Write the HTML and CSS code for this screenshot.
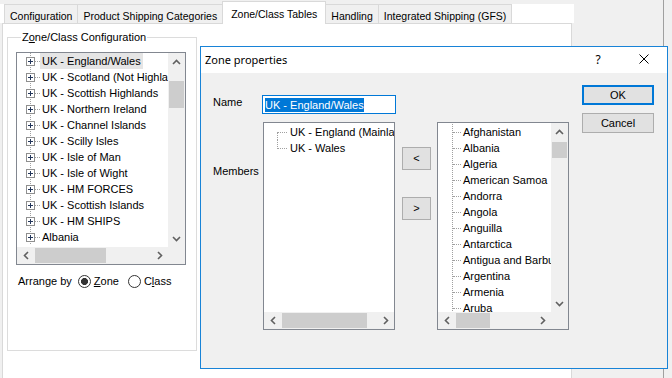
FILE: index.html
```html
<!DOCTYPE html>
<html lang="en">
<head>
    <meta charset="UTF-8">
    <title>Zone/Class Tables</title>
    <link rel="stylesheet" href="styles.css">
</head>
<body>
    <div class="app">
        <div class="left-pane">
            <div class="tabstrip">
                <div class="tab">Configuration</div>
                <div class="tab">Product Shipping Categories</div>
                <div class="tab active">Zone/Class Tables</div>
                <div class="tab">Handling</div>
                <div class="tab">Integrated Shipping (GFS)</div>
            </div>
            <div class="tabpanel">
                <!-- zone/class group -->
                <div class="groupbox">
                    <div class="groupbox-title">Z<u>o</u>ne/Class Configuration</div>
                    <div class="lv lv-main">
                        <div class="lv-content tree">
                            <div class="node sel"><span class="plus"></span><span class="dash"></span><span class="label">UK - England/Wales</span></div>
                            <div class="node"><span class="plus"></span><span class="dash"></span><span class="label">UK - Scotland (Not Highlands)</span></div>
                            <div class="node"><span class="plus"></span><span class="dash"></span><span class="label">UK - Scottish Highlands</span></div>
                            <div class="node"><span class="plus"></span><span class="dash"></span><span class="label">UK - Northern Ireland</span></div>
                            <div class="node"><span class="plus"></span><span class="dash"></span><span class="label">UK - Channel Islands</span></div>
                            <div class="node"><span class="plus"></span><span class="dash"></span><span class="label">UK - Scilly Isles</span></div>
                            <div class="node"><span class="plus"></span><span class="dash"></span><span class="label">UK - Isle of Man</span></div>
                            <div class="node"><span class="plus"></span><span class="dash"></span><span class="label">UK - Isle of Wight</span></div>
                            <div class="node"><span class="plus"></span><span class="dash"></span><span class="label">UK - HM FORCES</span></div>
                            <div class="node"><span class="plus"></span><span class="dash"></span><span class="label">UK - Scottish Islands</span></div>
                            <div class="node"><span class="plus"></span><span class="dash"></span><span class="label">UK - HM SHIPS</span></div>
                            <div class="node"><span class="plus"></span><span class="dash"></span><span class="label">Albania</span></div>
                        </div>
                        <div class="vscroll">
                            <div class="sb-btn"><svg width="9" height="6" viewBox="0 0 9 6"><path d="M1 5L4.5 1.5L8 5" fill="none" stroke="#606060" stroke-width="1.6"/></svg></div>
                            <div class="sb-track"><div class="thumb" style="margin-top:10px;height:27px"></div></div>
                            <div class="sb-btn"><svg width="9" height="6" viewBox="0 0 9 6"><path d="M1 1L4.5 4.5L8 1" fill="none" stroke="#606060" stroke-width="1.6"/></svg></div>
                        </div>
                        <div class="hscroll">
                            <div class="sb-btn"><svg width="6" height="9" viewBox="0 0 6 9"><path d="M5 1L1.5 4.5L5 8" fill="none" stroke="#606060" stroke-width="1.6"/></svg></div>
                            <div class="sb-track"><div class="thumb" style="width:71px"></div></div>
                            <div class="sb-btn"><svg width="6" height="9" viewBox="0 0 6 9"><path d="M1 1L4.5 4.5L1 8" fill="none" stroke="#606060" stroke-width="1.6"/></svg></div>
                        </div>
                        <div class="corner"></div>
                    </div>
                    <div class="arrange">
                        <span>Arrange by</span>
                        <span class="radio checked"></span><span class="radio-text"><u>Z</u>one</span>
                        <span class="radio"></span><span class="radio-text">C<u>l</u>ass</span>
                    </div>
                </div>
            </div>
        </div>
        <div class="right-pane"></div>
    </div>

    <!-- Zone properties dialog -->
    <div class="dialog">
        <div class="dlg-title">
            <span class="caption">Zone properties</span>
            <span class="title-btn">?</span>
            <span class="title-btn"><svg width="10" height="10" viewBox="0 0 10 10"><path d="M0.5 0.5L9.5 9.5M9.5 0.5L0.5 9.5" stroke="#000" stroke-width="1"/></svg></span>
        </div>
        <div class="dlg-body">
            <div class="dlg-form">
                <div class="field-label name-label">Name</div>
                <div class="name-input"><span class="selected-text">UK - England/Wales</span></div>
                <div></div>
                <div></div>

                <div class="field-label members-label">Members</div>
                <div class="lv lv-members">
                    <div class="lv-content tree">
                        <div class="node"><span class="conn conn-first"></span><span class="label">UK - England (Mainland)</span></div>
                        <div class="node"><span class="conn conn-last"></span><span class="label">UK - Wales</span></div>
                    </div>
                    <div class="hscroll">
                        <div class="sb-btn"><svg width="6" height="9" viewBox="0 0 6 9"><path d="M5 1L1.5 4.5L5 8" fill="none" stroke="#606060" stroke-width="1.6"/></svg></div>
                        <div class="sb-track"><div class="thumb" style="width:85px"></div></div>
                        <div class="sb-btn"><svg width="6" height="9" viewBox="0 0 6 9"><path d="M1 1L4.5 4.5L1 8" fill="none" stroke="#606060" stroke-width="1.6"/></svg></div>
                    </div>
                </div>
                <div class="arrows">
                    <div class="btn-small">&lt;</div>
                    <div class="btn-small">&gt;</div>
                </div>
                <div class="lv lv-all">
                    <div class="lv-content tree countries">
                        <div class="node"><span class="leaf"></span><span class="label">Afghanistan</span></div>
                        <div class="node"><span class="leaf"></span><span class="label">Albania</span></div>
                        <div class="node"><span class="leaf"></span><span class="label">Algeria</span></div>
                        <div class="node"><span class="leaf"></span><span class="label">American Samoa</span></div>
                        <div class="node"><span class="leaf"></span><span class="label">Andorra</span></div>
                        <div class="node"><span class="leaf"></span><span class="label">Angola</span></div>
                        <div class="node"><span class="leaf"></span><span class="label">Anguilla</span></div>
                        <div class="node"><span class="leaf"></span><span class="label">Antarctica</span></div>
                        <div class="node"><span class="leaf"></span><span class="label">Antigua and Barbuda</span></div>
                        <div class="node"><span class="leaf"></span><span class="label">Argentina</span></div>
                        <div class="node"><span class="leaf"></span><span class="label">Armenia</span></div>
                        <div class="node"><span class="leaf"></span><span class="label">Aruba</span></div>
                    </div>
                    <div class="vscroll">
                        <div class="sb-btn"><svg width="9" height="6" viewBox="0 0 9 6"><path d="M1 5L4.5 1.5L8 5" fill="none" stroke="#606060" stroke-width="1.6"/></svg></div>
                        <div class="sb-track"><div class="thumb" style="margin-top:1px;height:16px"></div></div>
                        <div class="sb-btn"><svg width="9" height="6" viewBox="0 0 9 6"><path d="M1 1L4.5 4.5L8 1" fill="none" stroke="#606060" stroke-width="1.6"/></svg></div>
                    </div>
                    <div class="hscroll">
                        <div class="sb-btn"><svg width="6" height="9" viewBox="0 0 6 9"><path d="M5 1L1.5 4.5L5 8" fill="none" stroke="#606060" stroke-width="1.6"/></svg></div>
                        <div class="sb-track"><div class="thumb" style="width:34px"></div></div>
                        <div class="sb-btn"><svg width="6" height="9" viewBox="0 0 6 9"><path d="M1 1L4.5 4.5L1 8" fill="none" stroke="#606060" stroke-width="1.6"/></svg></div>
                    </div>
                    <div class="corner"></div>
                </div>
            </div>
            <div class="dlg-buttons">
                <div class="btn btn-default">OK</div>
                <div class="btn">Cancel</div>
            </div>
        </div>
    </div>
</body>
</html>
```

FILE: styles.css
```css
* {
    margin: 0;
    padding: 0;
    box-sizing: border-box;
}
body {
    width: 672px;
    height: 378px;
    overflow: hidden;
    position: relative;
    background: #f0f0f0;
    font-family: "Liberation Sans", Arial, sans-serif;
    font-size: 11px;
    line-height: 13px;
    color: #000;
}
.app {
    display: flex;
    height: 378px;
}
.left-pane {
    width: 574px;
    display: flex;
    flex-direction: column;
    padding-top: 4px;
}
.right-pane {
    width: 90px;
    border-right: 1px solid #a0a0a0;
}

/* tabs */
.tabstrip {
    display: flex;
    align-items: flex-end;
    height: 19px;
    padding-left: 4px;
    background: #fff;
}
.tab {
    height: 19px;
    padding: 5px 5px 0;
    margin-right: -1px;
    font-size: 10.5px;
    white-space: nowrap;
    background: #f0f0f0;
    border: 1px solid #d9d9d9;
    border-bottom: none;
}
.tab.active {
    height: 23px;
    padding: 6px 8px 0;
    margin-bottom: -1px;
    background: #fff;
    position: relative;
    z-index: 1;
}
.tabpanel {
    flex: 1;
    width: 570px;
    margin-left: 2px;
    padding: 13px 0 0 4px;
    background: #fff;
    border: 1px solid #d9d9d9;
    border-bottom: none;
}

/* group box */
.groupbox {
    width: 190px;
    height: 314px;
    display: flex;
    flex-direction: column;
    padding-left: 8px;
    border: 1px solid #dcdcdc;
}
.groupbox-title {
    align-self: flex-start;
    margin: -7px 0 0 5px;
    padding: 0 1px;
    background: #fff;
}
.arrange {
    display: flex;
    align-items: center;
    margin: 10px 0 0 2px;
}
.radio {
    width: 13px;
    height: 13px;
    margin: 0 3px 0 6px;
    border: 1px solid #333;
    border-radius: 50%;
    background: #fff;
}
.radio.checked {
    background: radial-gradient(circle, #333 0 3.2px, #fff 3.8px);
}
.radio-text + .radio {
    margin-left: 9px;
}

/* list / tree views */
.lv {
    display: grid;
    grid-template-columns: 1fr 17px;
    grid-template-rows: 1fr 17px;
    background: #fff;
    border: 1px solid #828790;
}
.lv-main {
    width: 170px;
    height: 213px;
    margin-top: 8px;
}
.lv-content {
    overflow: hidden;
    white-space: nowrap;
}
.vscroll {
    display: flex;
    flex-direction: column;
    background: #f0f0f0;
}
.hscroll {
    display: flex;
    background: #f0f0f0;
}
.sb-btn {
    flex: none;
    width: 17px;
    height: 17px;
    display: flex;
    align-items: center;
    justify-content: center;
}
.sb-track {
    flex: 1;
    padding: 1px;
}
.vscroll .thumb {
    width: 15px;
    background: #cdcdcd;
}
.hscroll .thumb {
    height: 15px;
    background: #cdcdcd;
}
.corner {
    background: #f0f0f0;
}

.node {
    display: flex;
    align-items: center;
    height: 16px;
}
.node > span {
    flex: none;
}
.label {
    height: 16px;
    padding: 1px 2px 0;
    line-height: 14px;
}
.tree .node {
    background: repeating-linear-gradient(#a0a0a0 0 1px, transparent 1px 2px) 13px 0 / 1px 100% no-repeat;
}
.plus {
    width: 9px;
    height: 9px;
    margin-left: 9px;
    border: 1px solid #8f8f8f;
    background:
        linear-gradient(#22355a, #22355a) center / 5px 1px no-repeat,
        linear-gradient(#22355a, #22355a) center / 1px 5px no-repeat,
        #fff;
}
.dash {
    width: 5px;
    border-top: 1px dotted #a0a0a0;
}
.node.sel .label {
    background: #e5e5e5;
}

/* dialog */
.dialog {
    position: absolute;
    left: 200px;
    top: 46px;
    width: 468px;
    height: 323px;
    display: flex;
    flex-direction: column;
    background: #f0f0f0;
    border: 1px solid #1883d7;
}
.dlg-title {
    height: 26px;
    display: flex;
    align-items: center;
    padding: 0 0 2px 4px;
    background: #fff;
    font-family: "Noto Sans", "Liberation Sans", sans-serif;
    font-size: 11px;
}
.caption {
    flex: 1;
}
.title-btn {
    width: 46px;
    height: 24px;
    display: flex;
    align-items: center;
    justify-content: center;
    font-size: 12px;
}
.dlg-body {
    flex: 1;
    display: flex;
    align-items: flex-start;
    padding: 12px 0 0 12px;
}
.dlg-form {
    display: grid;
    grid-template-columns: 49px 134px 41px 132px;
    grid-template-rows: 19px 208px;
    row-gap: 8px;
    padding-top: 10px;
}
.name-label {
    align-self: start;
    margin-top: 1px;
}
.members-label {
    margin-top: 43px;
}
.name-input {
    height: 19px;
    display: flex;
    align-items: center;
    padding-left: 2px;
    background: #fff;
    border: 1px solid #0078d7;
}
.selected-text {
    line-height: 14px;
    background: #0078d7;
    color: #fff;
}
.lv-members {
    grid-template-columns: 1fr;
    width: 132px;
    margin-left: 1px;
}
.lv-members .tree {
    padding-top: 1px;
}
.lv-members .node {
    background: none;
}
.conn {
    width: 10px;
    height: 8px;
    margin-left: 13px;
    border-left: 1px dotted #a0a0a0;
}
.conn-first {
    align-self: flex-end;
    border-top: 1px dotted #a0a0a0;
}
.conn-last {
    align-self: flex-start;
    height: 9px;
    border-bottom: 1px dotted #a0a0a0;
}
.conn + .label {
    margin-left: 1px;
}
.arrows {
    display: flex;
    flex-direction: column;
    gap: 27px;
    padding: 25px 0 0 6px;
}
.btn-small {
    width: 29px;
    height: 23px;
    display: flex;
    align-items: center;
    justify-content: center;
    background: #e1e1e1;
    border: 1px solid #adadad;
}
.lv-all {
    width: 132px;
}
.countries {
    padding-top: 1px;
}
.countries .node {
    background-position: 14px 0;
}
.leaf {
    width: 8px;
    margin-left: 15px;
    border-top: 1px dotted #a0a0a0;
}
.dlg-buttons {
    display: flex;
    flex-direction: column;
    gap: 8px;
    margin-left: 13px;
}
.btn {
    width: 72px;
    height: 20px;
    display: flex;
    align-items: center;
    justify-content: center;
    background: #e1e1e1;
    border: 1px solid #adadad;
}
.btn-default {
    border: 2px solid #0078d7;
}
```
